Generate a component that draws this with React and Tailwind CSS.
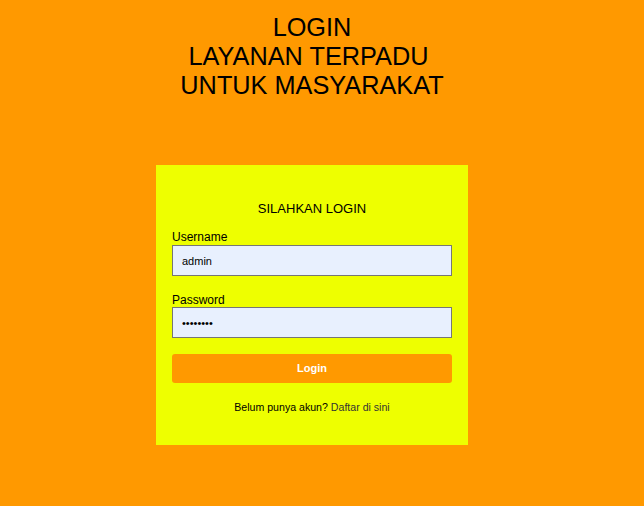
import React from "react";

export default function App() {
  return (
    <div
      className="min-h-[506px] w-full bg-[#ff9900] text-black"
      style={{ fontFamily: '"Liberation Sans", Arial, sans-serif' }}
    >
      <div className="flex w-[624px] flex-col items-center pt-[13px]">
        <h1 className="text-center text-[25.3px] font-normal leading-[29px]">
          LOGIN
          <br />
          {"LAYANAN TERPADU\u00a0"}
          <br />
          UNTUK MASYARAKAT
        </h1>
        <div className="mt-[65px] flex h-[280px] w-[312px] flex-col bg-[#eeff00] px-4 pt-[36px]">
          <h3 className="text-center text-[13px] leading-[15px]">SILAHKAN LOGIN</h3>
          <label className="mt-[14px] block text-[12px] leading-[14px]">Username</label>
          <input
            type="text"
            defaultValue="admin"
            readOnly
            className="mt-[1px] h-[31px] w-full border border-[#767676] bg-[#e8f0fe] px-[9px] text-[11px] text-black outline-none"
            style={{ fontFamily: '"Liberation Sans", Arial, sans-serif' }}
          />
          <label className="mt-[17px] block text-[12px] leading-[14px]">Password</label>
          <input
            type="password"
            defaultValue="12345678"
            readOnly
            className="mt-0 h-[31px] w-full border border-[#767676] bg-[#e8f0fe] px-[9px] text-[11px] text-black outline-none"
            style={{ fontFamily: '"Liberation Sans", Arial, sans-serif' }}
          />
          <button className="mt-[16px] h-[29px] w-full rounded-[3px] bg-[#ff9900] text-[11px] font-bold text-white">
            Login
          </button>
          <p className="mt-[18px] text-center text-[10.6px] leading-[13px]">
            Belum punya akun? <a className="text-[#333333]">Daftar di sini</a>
          </p>
        </div>
      </div>
    </div>
  );
}
